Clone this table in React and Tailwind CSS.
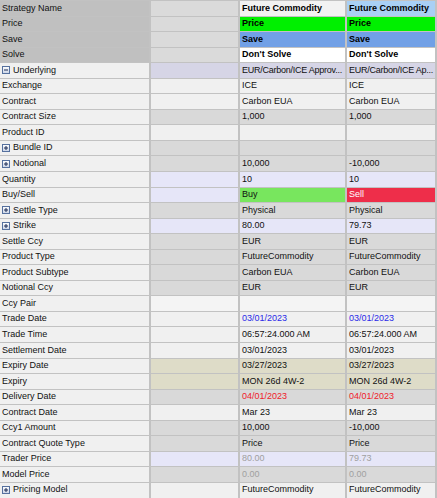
import React from 'react';

const LIGHT = 'bg-[#f0f0f0]';
const GRAY = 'bg-[#d9d9d9]';
const LAV = 'bg-[#e6e6f8]';
const KHAKI = 'bg-[#dedcc8]';

const rows = [
  { label: 'Strategy Name', head: true, a: 'Future Commodity', b: 'Future Commodity', bold: true, aBg: 'bg-[#f2f2f2]', bBg: 'bg-[#a9d0f5]' },
  { label: 'Price', head: true, a: 'Price', b: 'Price', bold: true, aBg: 'bg-[#00f000]', bBg: 'bg-[#00f000]' },
  { label: 'Save', head: true, a: 'Save', b: 'Save', bold: true, aBg: 'bg-[#71a0e6]', bBg: 'bg-[#71a0e6]' },
  { label: 'Solve', head: true, a: "Don't Solve", b: "Don't Solve", bold: true, aBg: 'bg-white', bBg: 'bg-white' },
  { label: 'Underlying', icon: 'minus', bg: 'bg-[#d6d5e6]', a: 'EUR/Carbon/ICE Approv...', b: 'EUR/Carbon/ICE Ap...', tight: true },
  { label: 'Exchange', bg: LIGHT, a: 'ICE', b: 'ICE' },
  { label: 'Contract', bg: LIGHT, a: 'Carbon EUA', b: 'Carbon EUA' },
  { label: 'Contract Size', bg: GRAY, a: '1,000', b: '1,000' },
  { label: 'Product ID', bg: LIGHT, a: '', b: '' },
  { label: 'Bundle ID', icon: 'plus', bg: GRAY, a: '', b: '' },
  { label: 'Notional', icon: 'plus', bg: GRAY, a: '10,000', b: '-10,000' },
  { label: 'Quantity', bg: LAV, a: '10', b: '10' },
  { label: 'Buy/Sell', bg: LAV, a: 'Buy', b: 'Sell', aBg: 'bg-[#78e65e]', bBg: 'bg-[#ee2e4a]', bText: 'text-white' },
  { label: 'Settle Type', icon: 'plus', bg: GRAY, a: 'Physical', b: 'Physical' },
  { label: 'Strike', icon: 'plus', bg: LAV, a: '80.00', b: '79.73' },
  { label: 'Settle Ccy', bg: GRAY, a: 'EUR', b: 'EUR' },
  { label: 'Product Type', bg: GRAY, a: 'FutureCommodity', b: 'FutureCommodity' },
  { label: 'Product Subtype', bg: GRAY, a: 'Carbon EUA', b: 'Carbon EUA' },
  { label: 'Notional Ccy', bg: GRAY, a: 'EUR', b: 'EUR' },
  { label: 'Ccy Pair', bg: 'bg-[#f4f4f4]', a: '', b: '' },
  { label: 'Trade Date', bg: LIGHT, a: '03/01/2023', b: '03/01/2023', text: 'text-[#2a2ae8]' },
  { label: 'Trade Time', bg: LIGHT, a: '06:57:24.000 AM', b: '06:57:24.000 AM' },
  { label: 'Settlement Date', bg: LIGHT, a: '03/01/2023', b: '03/01/2023' },
  { label: 'Expiry Date', bg: KHAKI, a: '03/27/2023', b: '03/27/2023' },
  { label: 'Expiry', bg: KHAKI, a: 'MON 26d 4W-2', b: 'MON 26d 4W-2' },
  { label: 'Delivery Date', bg: GRAY, a: '04/01/2023', b: '04/01/2023', text: 'text-[#f0202a]' },
  { label: 'Contract Date', bg: LIGHT, a: 'Mar 23', b: 'Mar 23' },
  { label: 'Ccy1 Amount', bg: GRAY, a: '10,000', b: '-10,000' },
  { label: 'Contract Quote Type', bg: GRAY, a: 'Price', b: 'Price' },
  { label: 'Trader Price', bg: LAV, a: '80.00', b: '79.73', text: 'text-[#a0a0a0]' },
  { label: 'Model Price', bg: GRAY, a: '0.00', b: '0.00', text: 'text-[#a0a0a0]' },
  { label: 'Pricing Model', icon: 'plus', bg: LIGHT, a: 'FutureCommodity', b: 'FutureCommodity' },
];

const BoxIcon = ({ kind }) => (
  <svg width="8" height="8" viewBox="0 0 8 8" className="mr-[3px] shrink-0">
    <defs>
      <linearGradient id={`g-${kind}`} x1="0" y1="0" x2="0" y2="1">
        <stop offset="0" stopColor="#ffffff" />
        <stop offset="1" stopColor="#c9d3e6" />
      </linearGradient>
    </defs>
    <rect x="0.5" y="0.5" width="7" height="7" fill={`url(#g-${kind})`} stroke="#55709e" />
    <rect x="2" y="3.5" width="4" height="1" fill="#1b2a55" />
    {kind === 'plus' && <rect x="3.5" y="2" width="1" height="4" fill="#1b2a55" />}
  </svg>
);

const Cell = ({ children, className = '' }) => (
  <div className={`h-[14.55px] flex items-center overflow-hidden whitespace-nowrap ${className}`}>{children}</div>
);

export default function App() {
  return (
    <div
      className="w-[437px] h-[498px] overflow-hidden bg-[#c2c2c2] pt-px pr-[2px] grid grid-cols-[149px_87px_105px_88px] gap-x-[2px] gap-y-px content-start text-[9px] text-[#111]"
      style={{ fontFamily: '"Liberation Sans", Arial, sans-serif' }}
    >
      {rows.map((r) => {
        const colBg = r.head ? 'bg-[#dadada]' : r.bg;
        const weight = r.bold ? 'font-bold text-black' : '';
        const tight = r.tight ? 'tracking-[-0.25px]' : '';
        return (
          <React.Fragment key={r.label}>
            <Cell className={`${r.head ? 'bg-[#c0c0c0]' : 'bg-[#f0f0f0]'} pl-[2px]`}>
              {r.icon && <BoxIcon kind={r.icon} />}
              {r.label}
            </Cell>
            <Cell className={colBg} />
            <Cell className={`${r.aBg || colBg} pl-[2px] ${weight} ${tight} ${r.text || ''}`}>{r.a}</Cell>
            <Cell className={`${r.bBg || colBg} pl-[2px] ${weight} ${tight} ${r.text || ''} ${r.bText || ''}`}>{r.b}</Cell>
          </React.Fragment>
        );
      })}
    </div>
  );
}
